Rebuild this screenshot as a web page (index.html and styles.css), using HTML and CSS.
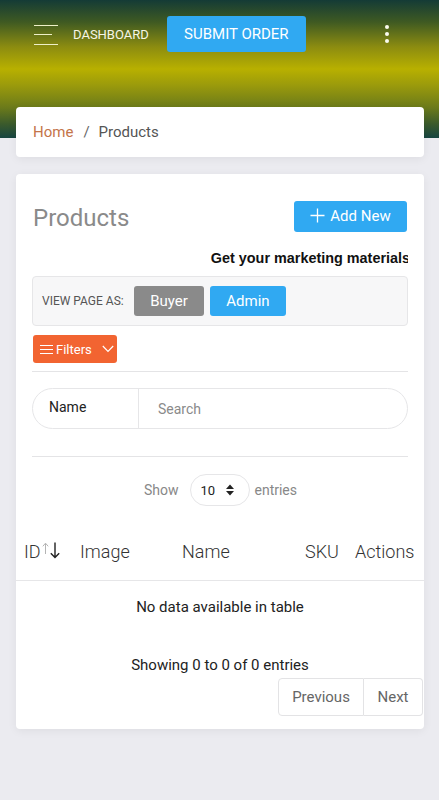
FILE: index.html
```html
<!DOCTYPE html>
<html lang="en">
<head>
<meta charset="utf-8">
<title>Products</title>
<link rel="stylesheet" href="styles.css">
</head>
<body>
<header class="topbar">
  <button class="burger" aria-label="menu">
    <span class="l1"></span><span class="l2"></span><span class="l3"></span>
  </button>
  <span class="dash">DASHBOARD</span>
  <button class="submit">SUBMIT ORDER</button>
  <span class="spacer"></span>
  <button class="kebab" aria-label="more"><i></i><i></i><i></i></button>
</header>

<nav class="crumbs card">
  <a class="home">Home</a><span class="sep">/</span><span class="cur">Products</span>
</nav>

<main class="card main">
  <div class="title-row">
    <h1>Products</h1>
    <button class="btn-blue add">
      <svg width="15" height="15" viewBox="0 0 15 15"><path d="M7.5 0.5v14M0.5 7.5h14" stroke="#fff" stroke-width="1.3" fill="none"/></svg>
      <span>Add New</span>
    </button>
  </div>

  <div class="marketing"><span>Get your marketing materials</span></div>

  <div class="viewas">
    <span class="viewas-label">VIEW PAGE AS:</span>
    <button class="btn-grey">Buyer</button>
    <button class="btn-blue admin">Admin</button>
  </div>

  <button class="filters">
    <svg width="13" height="11" viewBox="0 0 13 11"><path d="M0 1.5h13M0 5.5h13M0 9.5h13" stroke="#fff" stroke-width="1.1" fill="none"/></svg>
    <span>Filters</span>
    <svg class="chev" width="12" height="8" viewBox="0 0 12 8"><path d="M0.8 1l5.2 5.5L11.2 1" stroke="#fff" stroke-width="1.2" fill="none"/></svg>
  </button>

  <hr class="rule first">

  <div class="search">
    <span class="search-label">Name</span>
    <span class="search-input">Search</span>
  </div>

  <hr class="rule second">

  <div class="show">
    <span>Show</span>
    <span class="select">10
      <svg width="10" height="14" viewBox="0 0 10 14"><path d="M5 1.5L9 6H1z M5 12.5L9 8H1z" fill="#222"/></svg>
    </span>
    <span class="entries">entries</span>
  </div>

  <div class="table">
    <div class="thead">
      <div class="c1">ID<svg class="arrows" width="20" height="17" viewBox="0 0 20 17"><path d="M3.5 12V1.5M0.8 4.3L3.5 1.2L6.2 4.3" stroke="#b4b4b4" stroke-width="1" fill="none"/><path d="M13 0.5V15.5M8.8 11.2L13 15.6L17.2 11.2" stroke="#222" stroke-width="1.4" fill="none"/></svg></div>
      <div class="c2">Image</div>
      <div class="c3">Name</div>
      <div class="c4">SKU</div>
      <div class="c5">Actions</div>
    </div>
    <div class="empty">No data available in table</div>
  </div>

  <div class="info">Showing 0 to 0 of 0 entries</div>

  <div class="pager">
    <button class="prev">Previous</button><button class="next">Next</button>
  </div>
</main>
</body>
</html>
```

FILE: styles.css
```css
* { box-sizing: border-box; }

html, body { margin: 0; padding: 0; }

body {
  width: 439px;
  min-height: 800px;
  font-family: Roboto, "Noto Sans", sans-serif;
  background-color: #ebebf0;
  background-image: linear-gradient(to bottom,
    #143b36 0%,
    #3f5a22 16%,
    #8c8c10 34%,
    #b8b000 50%,
    #9a9a0c 62%,
    #6b7a1a 78%,
    #3a5a2c 90%,
    #174541 100%);
  background-size: 100% 138px;
  background-repeat: no-repeat;
  padding-bottom: 70px;
}

button { font-family: inherit; border: 0; cursor: pointer; }

.topbar {
  display: flex;
  align-items: center;
  height: 36px;
  margin-top: 16px;
  padding: 0 34px 0 34px;
}

.burger {
  width: 24px;
  height: 20px;
  padding: 0;
  background: none;
  display: flex;
  flex-direction: column;
  justify-content: space-between;
  margin-top: 1px;
}
.burger span { display: block; height: 1px; background: #eef0c8; }
.burger .l1, .burger .l3 { width: 24px; }
.burger .l2 { width: 18px; }

.dash {
  margin-left: 15px;
  color: #f6f6e6;
  font-size: 13px;
  letter-spacing: 0;
}

.submit {
  margin-left: 18px;
  height: 36px;
  width: 139px;
  padding: 0;
  background: #30a9f2;
  color: #fff;
  font-size: 15px;
  border-radius: 3px;
}

.spacer { flex: 1; }

.kebab {
  background: none;
  padding: 0;
  width: 6px;
  display: flex;
  flex-direction: column;
  align-items: center;
  gap: 3px;
  margin-right: 15px;
}
.kebab i { display: block; width: 4px; height: 4px; border-radius: 50%; background: #fbfbef; }

.card {
  background: #fff;
  margin: 0 15px 0 16px;
  border-radius: 4px;
  box-shadow: 0 2px 10px rgba(0, 0, 0, 0.06);
}

.crumbs {
  margin-top: 55px;
  height: 50px;
  display: flex;
  align-items: center;
  padding-left: 17px;
  font-size: 15px;
  color: #555;
}
.home { color: #c4744a; }
.sep { margin: 0 9px 0 10px; color: #666; }

.main {
  margin-top: 17px;
  padding: 27px 16px 13px 16px;
}

.title-row {
  display: flex;
  justify-content: space-between;
  align-items: center;
  height: 31px;
}
.title-row h1 {
  margin: 0 0 0 1px;
  font-size: 24px;
  font-weight: 400;
  color: #8a8a8a;
  position: relative;
  top: 1px;
}

.btn-blue {
  background: #30a9f2;
  color: #fff;
  border-radius: 3px;
  font-size: 15px;
}
.add {
  width: 113px;
  height: 31px;
  display: flex;
  align-items: center;
  justify-content: center;
  gap: 5px;
  padding: 0 0 2px 0;
  margin-right: 1px;
}

.marketing {
  margin-top: 17px;
  height: 18px;
  overflow: hidden;
  white-space: nowrap;
  text-align: right;
  font-family: "Liberation Sans", Arial, sans-serif;
  font-weight: 700;
  font-size: 14.4px;
  color: #111;
  line-height: 18px;
}
.marketing span { margin-right: -2px; }

.viewas {
  margin-top: 9px;
  height: 50px;
  background: #f7f7f8;
  border: 1px solid #e6e6e8;
  border-radius: 4px;
  display: flex;
  align-items: center;
  padding-left: 9px;
}
.viewas-label {
  font-size: 12px;
  color: #555;
  width: 92px;
}
.btn-grey {
  background: #8a8a8a;
  color: #fff;
  font-size: 15px;
  height: 30px;
  width: 70px;
  border-radius: 3px;
}
.admin { height: 30px; width: 76px; margin-left: 6px; }

.filters {
  margin-top: 9px;
  margin-left: 1px;
  height: 28px;
  width: 84px;
  background: #f26431;
  color: #fff;
  border-radius: 3px;
  display: flex;
  align-items: center;
  padding: 0 0 0 7px;
  font-size: 13px;
}
.filters span { margin-left: 3px; }
.filters .chev { margin-left: 10px; }

.rule {
  border: 0;
  height: 1px;
  background: #e4e4e6;
  margin: 0;
}
.rule.first { margin-top: 8px; }

.search {
  margin-top: 16px;
  height: 41px;
  border: 1px solid #e6e6e8;
  border-radius: 21px;
  display: flex;
  align-items: stretch;
  font-size: 14px;
}
.search-label {
  width: 106px;
  border-right: 1px solid #e6e6e8;
  padding-left: 16px;
  display: flex;
  align-items: center;
  padding-bottom: 4px;
  color: #222;
}
.search-input {
  display: flex;
  align-items: center;
  padding-left: 19px;
  color: #8a8a8a;
}

.rule.second { margin-top: 27px; }

.show {
  margin-top: 17px;
  display: flex;
  justify-content: center;
  align-items: center;
  font-size: 14px;
  color: #888;
  padding-left: 1px;
}
.select {
  margin-left: 12px;
  width: 60px;
  height: 32px;
  border: 1px solid #e6e6e8;
  border-radius: 16px;
  display: flex;
  align-items: center;
  justify-content: space-between;
  padding: 0 14px 0 9px;
  color: #222;
  font-size: 13px;
}
.entries { margin-left: 4px; }

.table {
  margin: 17px -16px 0 -16px;
}
.thead {
  display: grid;
  grid-template-columns: 56px 102px 123px 50px 77px;
  padding: 17px 0 16px;
  border-bottom: 1px solid #e6e6e8;
  font-size: 18px;
  font-weight: 300;
  color: #333;
  line-height: 24px;
}
.thead > div { padding-left: 8px; white-space: nowrap; }
.arrows { vertical-align: top; margin-top: 2px; margin-left: 1px; }

.empty {
  text-align: center;
  font-size: 15px;
  color: #222;
  padding: 17px 0 18px;
  line-height: 18px;
}

.info {
  margin-top: 22px;
  text-align: center;
  font-size: 15px;
  color: #222;
  line-height: 18px;
}

.pager {
  margin-top: 4px;
  margin-right: -15px;
  display: flex;
  justify-content: flex-end;
}
.pager button {
  height: 38px;
  background: #fff;
  border: 1px solid #e3e3e5;
  color: #666;
  font-size: 15px;
}
.prev { width: 86px; border-radius: 4px 0 0 4px; }
.next { width: 59px; border-left: 0 !important; border-radius: 0 4px 4px 0; }
```
